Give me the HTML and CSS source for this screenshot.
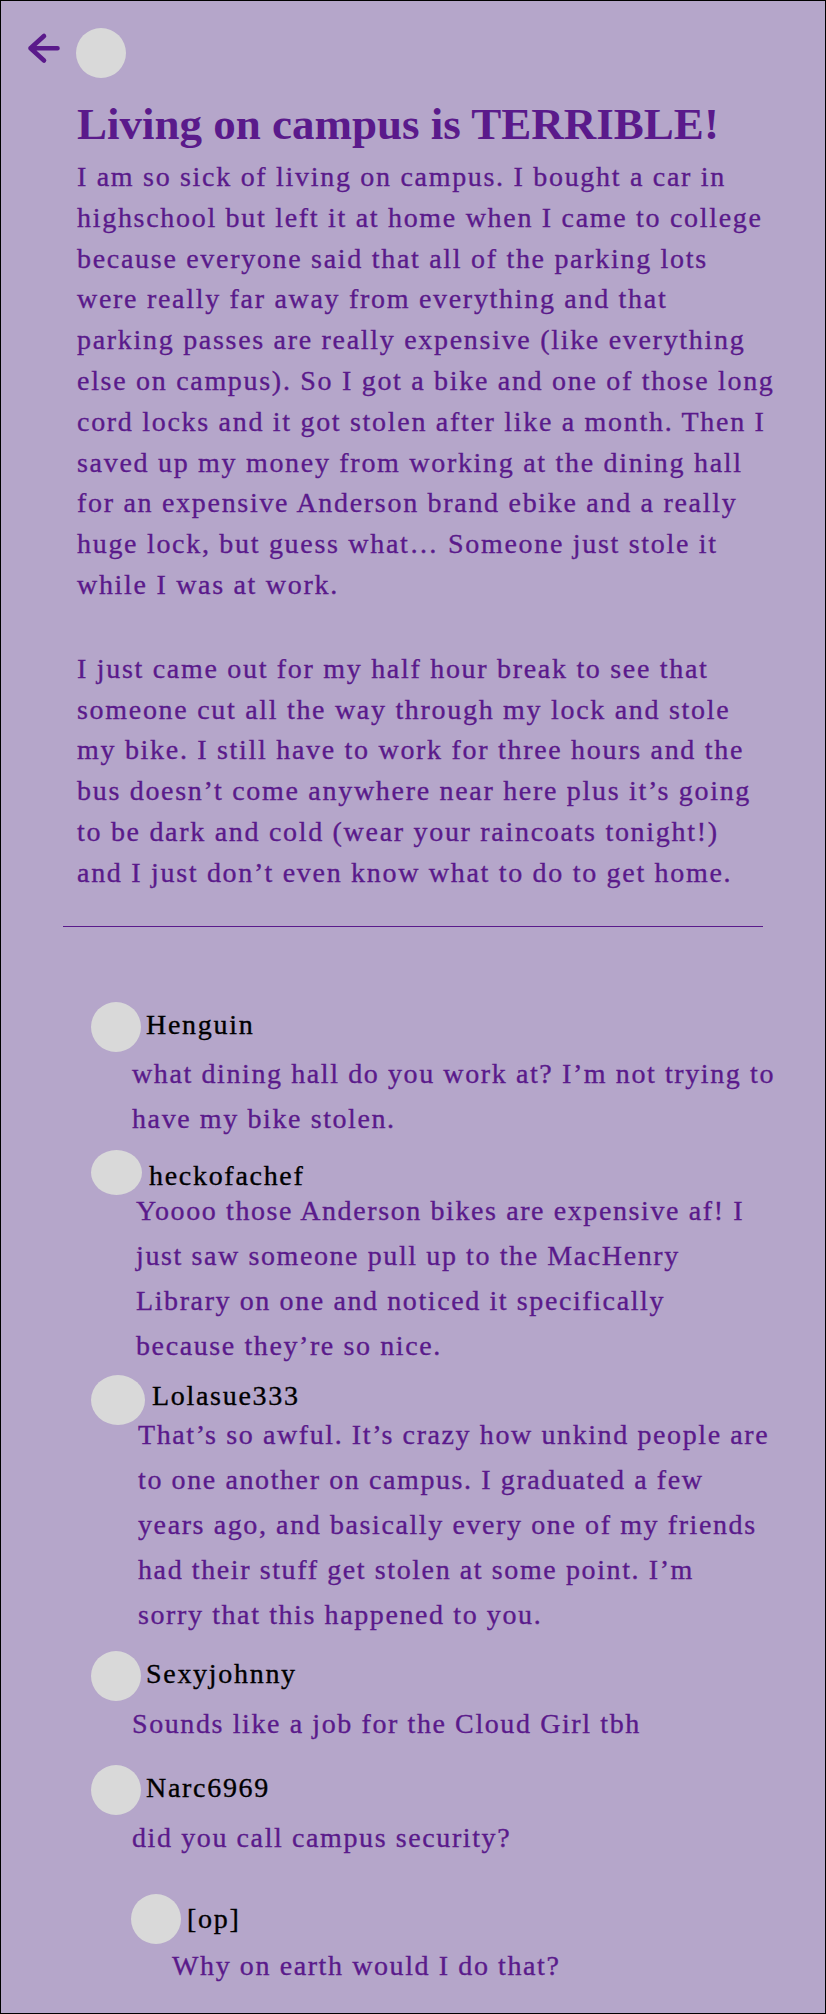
FILE: index.html
```html
<!DOCTYPE html>
<html lang="en">
<head>
<meta charset="utf-8">
<title>Living on campus is TERRIBLE!</title>
<link rel="stylesheet" href="styles.css">
</head>
<body>
  <header class="topbar">
    <svg class="back" viewBox="0 0 36 34" width="36" height="34" aria-label="Back">
      <path d="M31.5 17.3 H4.5 M18 5 L4.5 17.3 L18 29.5" fill="none" stroke="#5a1a8b" stroke-width="4.6" stroke-linecap="round" stroke-linejoin="round"/>
    </svg>
    <span class="avatar avatar-op"></span>
  </header>

  <main class="post">
    <h1 class="post-title">Living on campus is TERRIBLE!</h1>
    <p class="post-body">I am so sick of living on campus. I bought a car in<br>highschool but left it at home when I came to college<br>because everyone said that all of the parking lots<br>were really far away from everything and that<br>parking passes are really expensive (like everything<br>else on campus). So I got a bike and one of those long<br>cord locks and it got stolen after like a month. Then I<br>saved up my money from working at the dining hall<br>for an expensive Anderson brand ebike and a really<br>huge lock, but guess what… Someone just stole it<br>while I was at work.</p>
    <p class="post-body post-body-2">I just came out for my half hour break to see that<br>someone cut all the way through my lock and stole<br>my bike. I still have to work for three hours and the<br>bus doesn’t come anywhere near here plus it’s going<br>to be dark and cold (wear your raincoats tonight!)<br>and I just don’t even know what to do to get home.</p>
  </main>

  <hr class="divider">

  <section class="comments">
    <article class="comment c1">
      <div class="comment-head">
        <span class="avatar"></span>
        <span class="name">Henguin</span>
      </div>
      <p class="comment-text">what dining hall do you work at? I’m not trying to<br>have my bike stolen.</p>
    </article>

    <article class="comment c2">
      <div class="comment-head">
        <span class="avatar"></span>
        <span class="name">heckofachef</span>
      </div>
      <p class="comment-text">Yoooo those Anderson bikes are expensive af! I<br>just saw someone pull up to the MacHenry<br>Library on one and noticed it specifically<br>because they’re so nice.</p>
    </article>

    <article class="comment c3">
      <div class="comment-head">
        <span class="avatar"></span>
        <span class="name">Lolasue333</span>
      </div>
      <p class="comment-text">That’s so awful. It’s crazy how unkind people are<br>to one another on campus. I graduated a few<br>years ago, and basically every one of my friends<br>had their stuff get stolen at some point. I’m<br>sorry that this happened to you.</p>
    </article>

    <article class="comment c4">
      <div class="comment-head">
        <span class="avatar"></span>
        <span class="name">Sexyjohnny</span>
      </div>
      <p class="comment-text">Sounds like a job for the Cloud Girl tbh</p>
    </article>

    <article class="comment c5">
      <div class="comment-head">
        <span class="avatar"></span>
        <span class="name">Narc6969</span>
      </div>
      <p class="comment-text">did you call campus security?</p>
    </article>

    <article class="comment reply c6">
      <div class="comment-head">
        <span class="avatar"></span>
        <span class="name">[op]</span>
      </div>
      <p class="comment-text">Why on earth would I do that?</p>
    </article>
  </section>
</body>
</html>
```

FILE: styles.css
```css
* {
  box-sizing: border-box;
}

html, body {
  margin: 0;
  padding: 0;
}

body {
  min-height: 100vh;
  border: 1px solid #000;
  background: #b5a6ca;
  color: #5a1a8b;
  font-family: "Liberation Serif", "Times New Roman", serif;
}

/* top bar */
.topbar {
  display: flex;
  align-items: flex-start;
  gap: 14px;
  padding: 27px 0 0 25px;
}

.back {
  display: block;
  margin-top: 3px;
  flex: none;
}

.avatar {
  display: block;
  flex: none;
  width: 50px;
  height: 50px;
  border-radius: 50%;
  background: #d9d9d9;
}

/* post */
.post {
  padding-left: 76px;
}

.post-title {
  margin: 21px 0 0;
  font-size: 45px;
  line-height: 50px;
  font-weight: 700;
  color: #5a1a8b;
  white-space: nowrap;
}

.post-body {
  margin: 8px 0 0;
  font-size: 28px;
  line-height: 40.8px;
  letter-spacing: 1.7px;
  -webkit-text-stroke: 0.35px currentColor;
  white-space: nowrap;
}

.post-body-2 {
  margin-top: 43px;
}

.divider {
  display: block;
  width: 700px;
  height: 1px;
  margin: 32px 0 0 62px;
  border: 0;
  background: #5a1a8b;
}

/* comments */
.comments {
  padding: 75px 0 0 90px;
}

.comment-head {
  display: flex;
  align-items: flex-start;
  gap: 5px;
}

.name {
  margin-top: 7px;
  font-size: 28px;
  line-height: 31px;
  letter-spacing: 1.7px;
  -webkit-text-stroke: 0.35px currentColor;
  color: #000;
  white-space: nowrap;
}

.comment-text {
  margin: 0 0 0 41px;
  font-size: 28px;
  line-height: 45px;
  letter-spacing: 1.6px;
  -webkit-text-stroke: 0.35px currentColor;
  white-space: nowrap;
}

.c1 .comment-text { margin-top: -1px; }

.c2 { margin-top: 9px; }
.c2 .avatar { width: 51px; height: 45px; }
.c2 .comment-head { gap: 7px; }
.c2 .name { margin-top: 10px; }
.c2 .comment-text { margin-top: -7px; margin-left: 45px; }

.c3 { margin-top: 7px; }
.c3 .avatar { width: 54px; height: 50px; }
.c3 .comment-head { gap: 7px; }
.c3 .name { margin-top: 5px; }
.c3 .comment-text { margin-top: -13px; margin-left: 47px; }

.c4 { margin-top: 14px; }

.c5 { margin-top: 19px; }

.reply {
  margin-top: 34px;
  margin-left: 40px;
}
.reply .comment-head { gap: 6px; }
.reply .name { margin-top: 9px; }
.reply .comment-text { margin-top: -1px; }
```
